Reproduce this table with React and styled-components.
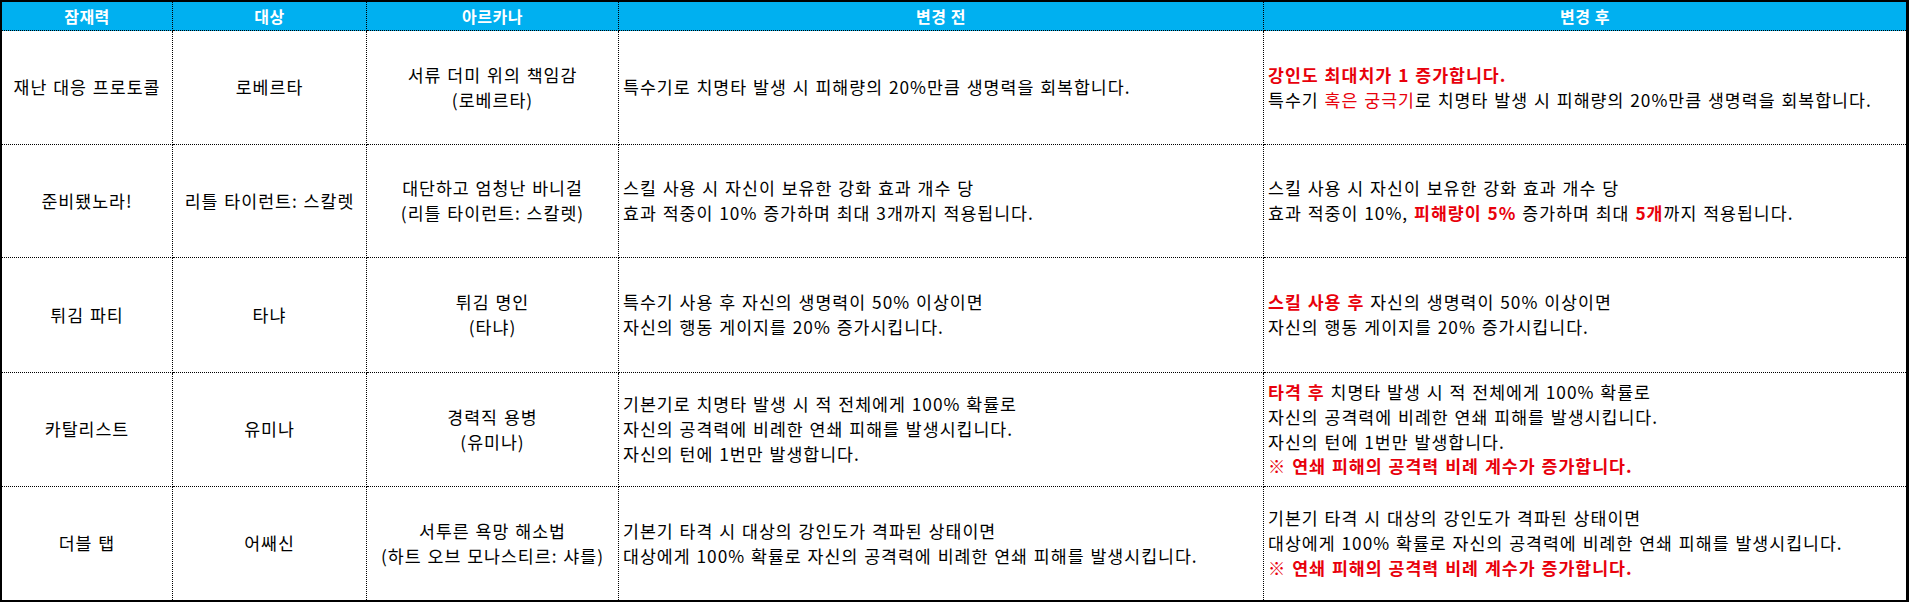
import React from "react";
import styled, { createGlobalStyle } from "styled-components";

const Global = createGlobalStyle`
  html, body { margin: 0; padding: 0; background: #fff; }
  body { font-family: "Noto Sans CJK KR", "Noto Sans", sans-serif; }
`;

const Table = styled.div`
  display: grid;
  grid-template-columns: 171px 194px 252px 645px 642px;
  grid-template-rows: 29px 114px 113px 115px 114px 113px;
  width: 1909px;
  height: 602px;
  box-sizing: border-box;
  border-style: solid;
  border-color: #000;
  border-width: 2px 3px 2px 2px;
  font-family: "Noto Sans CJK KR", "Noto Sans", sans-serif;
  color: #000;
`;

const BaseCell = styled.div`
  box-sizing: border-box;
  border-right: ${(p) => (p.$lastCol ? "none" : "1px dotted #000")};
  border-bottom: ${(p) => (p.$lastRow ? "none" : "1px dotted #000")};
  display: flex;
  flex-direction: column;
  justify-content: center;
  overflow: hidden;
  white-space: nowrap;
`;

const HeaderCell = styled(BaseCell)`
  background: #00b0f0;
  color: #fff;
  font-weight: 700;
  font-size: 16px;
  letter-spacing: 0.5px;
  align-items: center;
  line-height: 1;
`;

const Cell = styled(BaseCell)`
  font-size: 17.3px;
  line-height: 24.7px;
  letter-spacing: 1px;
  word-spacing: 1px;
  align-items: ${(p) => (p.$left ? "flex-start" : "center")};
  text-align: ${(p) => (p.$left ? "left" : "center")};
  padding-left: ${(p) => (p.$left ? "4px" : "0")};
`;

const Line = styled.div``;

const Red = styled.span`
  color: #e8000b;
  font-weight: ${(p) => (p.$bold ? 700 : 400)};
`;

const headers = ["잠재력", "대상", "아르카나", "변경 전", "변경 후"];

const rows = [
  {
    name: "재난 대응 프로토콜",
    target: "로베르타",
    arcana: ["서류 더미 위의 책임감", "(로베르타)"],
    before: [["특수기로 치명타 발생 시 피해량의 20%만큼 생명력을 회복합니다."]],
    after: [
      [{ t: "강인도 최대치가 1 증가합니다.", b: true }],
      ["특수기 ", { t: "혹은 궁극기", b: false }, "로 치명타 발생 시 피해량의 20%만큼 생명력을 회복합니다."],
    ],
  },
  {
    name: "준비됐노라!",
    target: "리틀 타이런트: 스칼렛",
    arcana: ["대단하고 엄청난 바니걸", "(리틀 타이런트: 스칼렛)"],
    before: [
      ["스킬 사용 시 자신이 보유한 강화 효과 개수 당"],
      ["효과 적중이 10% 증가하며 최대 3개까지 적용됩니다."],
    ],
    after: [
      ["스킬 사용 시 자신이 보유한 강화 효과 개수 당"],
      [
        "효과 적중이 10%, ",
        { t: "피해량이 5%", b: true },
        " 증가하며 최대 ",
        { t: "5개", b: true },
        "까지 적용됩니다.",
      ],
    ],
  },
  {
    name: "튀김 파티",
    target: "타냐",
    arcana: ["튀김 명인", "(타냐)"],
    before: [
      ["특수기 사용 후 자신의 생명력이 50% 이상이면"],
      ["자신의 행동 게이지를 20% 증가시킵니다."],
    ],
    after: [
      [{ t: "스킬 사용 후", b: true }, " 자신의 생명력이 50% 이상이면"],
      ["자신의 행동 게이지를 20% 증가시킵니다."],
    ],
  },
  {
    name: "카탈리스트",
    target: "유미나",
    arcana: ["경력직 용병", "(유미나)"],
    before: [
      ["기본기로 치명타 발생 시 적 전체에게 100% 확률로"],
      ["자신의 공격력에 비례한 연쇄 피해를 발생시킵니다."],
      ["자신의 턴에 1번만 발생합니다."],
    ],
    after: [
      [{ t: "타격 후", b: true }, " 치명타 발생 시 적 전체에게 100% 확률로"],
      ["자신의 공격력에 비례한 연쇄 피해를 발생시킵니다."],
      ["자신의 턴에 1번만 발생합니다."],
      [{ t: "※ 연쇄 피해의 공격력 비례 계수가 증가합니다.", b: true }],
    ],
  },
  {
    name: "더블 탭",
    target: "어쌔신",
    arcana: ["서투른 욕망 해소법", "(하트 오브 모나스티르: 샤를)"],
    before: [
      ["기본기 타격 시 대상의 강인도가 격파된 상태이면"],
      ["대상에게 100% 확률로 자신의 공격력에 비례한 연쇄 피해를 발생시킵니다."],
    ],
    after: [
      ["기본기 타격 시 대상의 강인도가 격파된 상태이면"],
      ["대상에게 100% 확률로 자신의 공격력에 비례한 연쇄 피해를 발생시킵니다."],
      [{ t: "※ 연쇄 피해의 공격력 비례 계수가 증가합니다.", b: true }],
    ],
  },
];

const RichLines = ({ lines }) =>
  lines.map((parts, i) => (
    <Line key={i}>
      {parts.map((p, j) =>
        typeof p === "string" ? (
          <React.Fragment key={j}>{p}</React.Fragment>
        ) : (
          <Red key={j} $bold={p.b}>
            {p.t}
          </Red>
        )
      )}
    </Line>
  ));

export default function App() {
  return (
    <>
      <Global />
      <Table>
        {headers.map((h, i) => (
          <HeaderCell key={h} $lastCol={i === headers.length - 1}>
            {h}
          </HeaderCell>
        ))}
        {rows.map((r, ri) => {
          const lastRow = ri === rows.length - 1;
          return (
            <React.Fragment key={r.name}>
              <Cell $lastRow={lastRow}>
                <Line>{r.name}</Line>
              </Cell>
              <Cell $lastRow={lastRow}>
                <Line>{r.target}</Line>
              </Cell>
              <Cell $lastRow={lastRow}>
                {r.arcana.map((a) => (
                  <Line key={a}>{a}</Line>
                ))}
              </Cell>
              <Cell $left $lastRow={lastRow}>
                <RichLines lines={r.before} />
              </Cell>
              <Cell $left $lastRow={lastRow} $lastCol>
                <RichLines lines={r.after} />
              </Cell>
            </React.Fragment>
          );
        })}
      </Table>
    </>
  );
}
